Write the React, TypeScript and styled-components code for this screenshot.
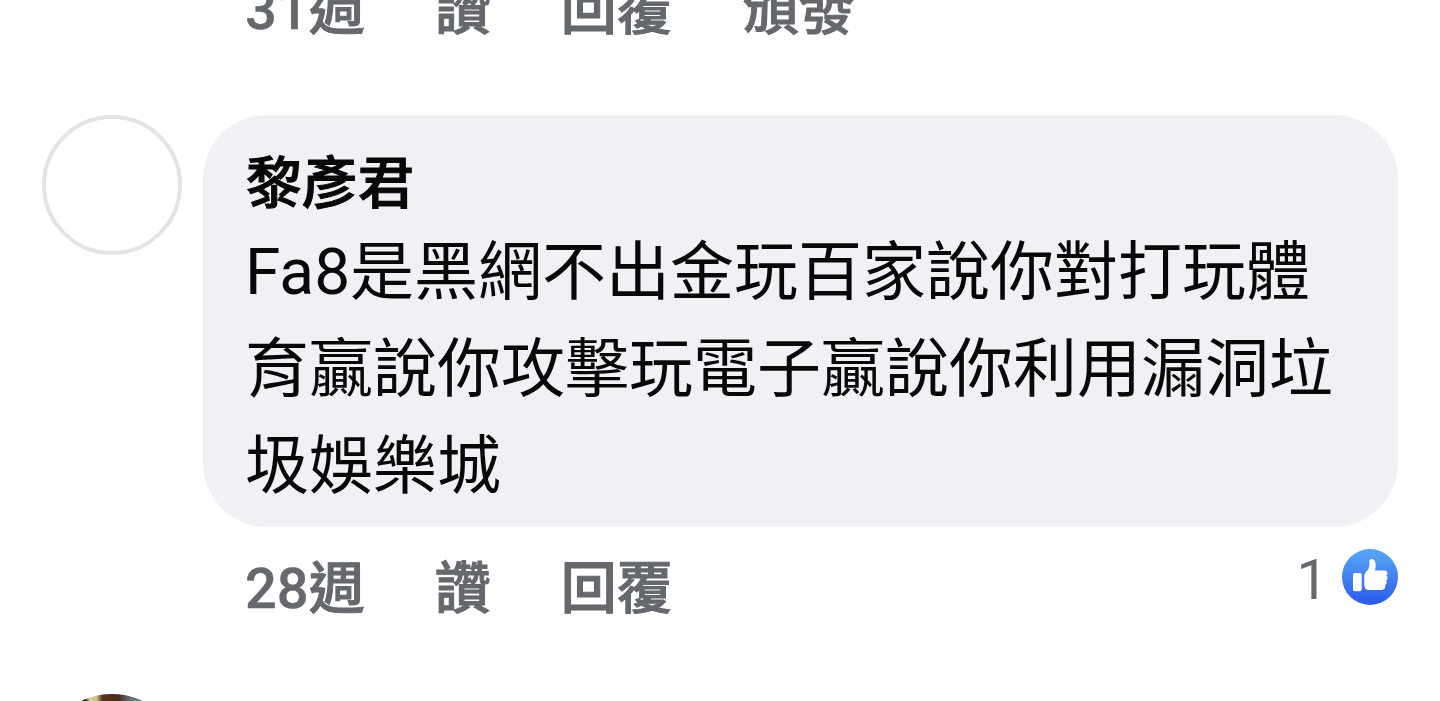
import styled, { createGlobalStyle } from "styled-components";

const GlobalStyle = createGlobalStyle`
  * {
    box-sizing: border-box;
  }
  html,
  body {
    margin: 0;
    background: #ffffff;
  }
  body {
    overflow: hidden;
    font-family: Roboto, "Noto Sans CJK TC", sans-serif;
    color: #080809;
  }
`;

const Thread = styled.main`
  display: flex;
  flex-direction: column;
  height: 701px;
  overflow: hidden;
`;

const Comment = styled.article<{ $top: number }>`
  display: grid;
  grid-template-columns: 140px 1195px;
  column-gap: 21px;
  margin-top: ${({ $top }) => $top}px;
  padding-left: 42px;
`;

const Avatar = styled.div`
  width: 140px;
  height: 140px;
  border: 4px solid #e4e4e4;
  border-radius: 50%;
  background: #ffffff;
`;

const Bubble = styled.div`
  height: 412px;
  padding: 29px 42px 0;
  border-radius: 64px;
  background: #f0f1f5;
`;

const Author = styled.div`
  padding-left: 1px;
  font-size: 56px;
  font-weight: 500;
  line-height: 80px;
  -webkit-text-stroke: 1.1px currentColor;
`;

const Message = styled.p`
  margin: 0;
  font-size: 64px;
  line-height: 97px;
  white-space: nowrap;
`;

const Footer = styled.div`
  display: flex;
  justify-content: space-between;
  height: 80px;
  margin-top: 20px;
`;

const Actions = styled.div<{ $clipped?: boolean }>`
  display: flex;
  gap: 70px;
  height: 80px;
  margin-top: ${({ $clipped }) => ($clipped ? "-30px" : "2px")};
  padding-left: ${({ $clipped }) => ($clipped ? "245px" : "42px")};
  color: #65686c;
  font-size: 56px;
  font-weight: 500;
  line-height: 80px;
  white-space: nowrap;
  -webkit-text-stroke: 0.4px currentColor;
`;

const Label = styled.span`
  -webkit-text-stroke: 1px currentColor;
`;

const Reactions = styled.div`
  display: flex;
  gap: 14px;
  color: #65686c;
  font-size: 56px;
  line-height: 66px;
`;

const LikeIcon = styled.svg`
  width: 56px;
  height: 56px;
  margin-top: 2px;
`;

const NextAvatar = styled.div`
  width: 140px;
  height: 140px;
  border-radius: 50%;
  background: linear-gradient(
    90deg,
    #1b1815 31%,
    #d9d3a5 34%,
    #cabf8b 39%,
    #53341f 43%,
    #4b2d1d 55%,
    #64706d 63%,
    #668b98 75%
  );
`;

const Like = () => (
  <LikeIcon viewBox="0 0 56 56">
    <defs>
      <linearGradient id="like-blue" x1="0" y1="0" x2="0" y2="1">
        <stop offset="0.1" stopColor="#53a0f4" />
        <stop offset="1" stopColor="#2b59ed" />
      </linearGradient>
    </defs>
    <circle cx="28" cy="28" r="28" fill="url(#like-blue)" />
    <rect x="11" y="24" width="8.7" height="18.2" rx="1.8" fill="#fff" />
    <path
      d="M22.3 27.2c0-2.2.9-3.6 2.3-5 2-2 2.7-4.2 2.7-6.8v-3.1c0-1.6 1-2.3 2.3-2.3 2.6 0 4.1 2.6 4.1 6 0 2.2-.4 3.8-1 5.4h9.8c1.8 0 3 1.1 3 2.7 0 1.1-.5 1.9-1.3 2.4.9.5 1.3 1.4 1.3 2.4 0 1.3-.6 2.2-1.6 2.7.6.5.8 1.2.8 2 0 1.4-.7 2.3-1.8 2.7.3.5.4 1 .4 1.5 0 1.8-1.4 3.1-3.6 3.1H27.2c-3.2 0-4.9-1.6-4.9-4.5z"
      fill="#fff"
    />
  </LikeIcon>
);

export default function App() {
  return (
    <>
      <GlobalStyle />
      <Thread lang="zh-Hant">
        <Actions $clipped>
          <span>
            31<Label>週</Label>
          </span>
          <Label>讚</Label>
          <Label>回覆</Label>
          <Label>頒發</Label>
        </Actions>
        <Comment $top={65}>
          <Avatar />
          <div>
            <Bubble>
              <Author>黎彥君</Author>
              <Message>
                Fa8是黑網不出金玩百家說你對打玩體
                <br />
                育贏說你攻擊玩電子贏說你利用漏洞垃
                <br />
                圾娛樂城
              </Message>
            </Bubble>
            <Footer>
              <Actions>
                <span>
                  28<Label>週</Label>
                </span>
                <Label>讚</Label>
                <Label>回覆</Label>
              </Actions>
              <Reactions>
                <span>1</span>
                <Like />
              </Reactions>
            </Footer>
          </div>
        </Comment>
        <Comment $top={67}>
          <NextAvatar />
        </Comment>
      </Thread>
    </>
  );
}
